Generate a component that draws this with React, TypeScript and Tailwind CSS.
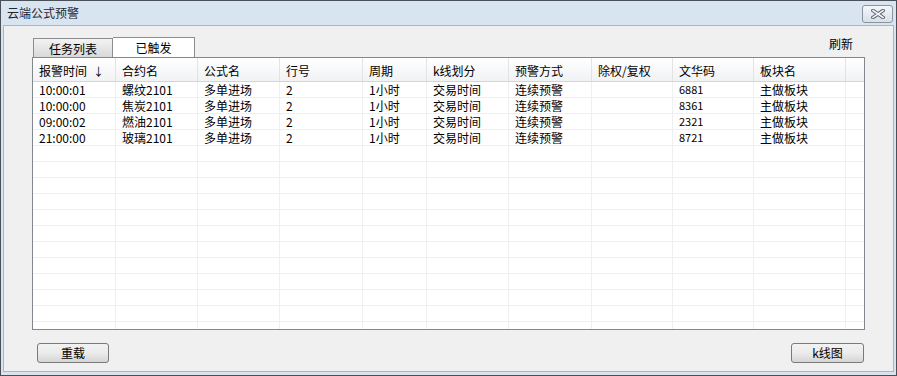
import React from "react";

const font = { fontFamily: '"Noto Sans CJK SC", "Liberation Sans", sans-serif' };

const columns = [
  { title: "报警时间", w: "w-[83px]" },
  { title: "合约名", w: "w-[82px]" },
  { title: "公式名", w: "w-[82px]" },
  { title: "行号", w: "w-[83px]" },
  { title: "周期", w: "w-[64px]" },
  { title: "k线划分", w: "w-[82px]" },
  { title: "预警方式", w: "w-[83px]" },
  { title: "除权/复权", w: "w-[81px]" },
  { title: "文华码", w: "w-[81px]" },
  { title: "板块名", w: "w-[92px]" },
];

const rows = [
  ["10:00:01", "螺纹2101", "多单进场", "2", "1小时", "交易时间", "连续预警", "", "6881", "主做板块"],
  ["10:00:00", "焦炭2101", "多单进场", "2", "1小时", "交易时间", "连续预警", "", "8361", "主做板块"],
  ["09:00:02", "燃油2101", "多单进场", "2", "1小时", "交易时间", "连续预警", "", "2321", "主做板块"],
  ["21:00:00", "玻璃2101", "多单进场", "2", "1小时", "交易时间", "连续预警", "", "8721", "主做板块"],
];

const blankRows = Array.from({ length: 12 }, () => Array(10).fill(""));

function CloseButton() {
  return <div className="flex h-[18px] w-[31px] items-center justify-center rounded-[3px] border border-[#8b939c] bg-gradient-to-b from-[#f4f7fb] to-[#d7dfe8]">
    <svg width="14" height="10" viewBox="0 0 14 10">
      <path d="M2 1.5 L12 8.5 M12 1.5 L2 8.5" stroke="#5d6670" strokeWidth="3.6" strokeLinecap="square" />
      <path d="M2 1.5 L12 8.5 M12 1.5 L2 8.5" stroke="#f2f4f7" strokeWidth="1.6" strokeLinecap="square" />
    </svg>
  </div>;
}

function Button({ children, className = "" }: { children: React.ReactNode; className?: string }) {
  return <div className={`flex h-[20px] items-center justify-center rounded-[3px] border border-[#7a7a7a] bg-gradient-to-b from-[#f2f2f2] via-[#ebebeb] to-[#d5d5d5] text-[12px] text-black ${className}`}>{children}</div>;
}

export default function App() {
  return <div style={font} className="flex h-[376px] w-[897px] flex-col border border-[#4a5059] bg-[#d9e4f1] text-[12px] text-black">
    <div className="flex h-[24px] items-center justify-between pl-[6px] pr-[3px]">
      <span className="text-[12px] text-[#1e2630]">云端公式预警</span>
      <div className="mt-[2px]"><CloseButton /></div>
    </div>

    <div className="mx-[2px] mb-[3px] flex flex-1 flex-col border border-[#aab6c4] bg-[#f0f0f0] px-[28px]">
      <div className="mt-[11px] flex h-[20px] items-end justify-between">
        <div className="flex items-end pl-[1px]">
          <div className="flex h-[19px] w-[80px] items-center justify-center border border-b-0 border-[#8d8d8d] bg-gradient-to-b from-[#f3f3f3] to-[#d9d9d9] pt-[1px]">任务列表</div>
          <div className="flex h-[20px] w-[82px] items-center justify-center border border-b-0 border-l-0 border-[#8d8d8d] bg-white">已触发</div>
        </div>
        <span className="mb-[4px] mr-[12px]">刷新</span>
      </div>

      <div className="h-[273px] overflow-hidden border border-[#828790] bg-white">
        <div className="flex h-[24px] border-b border-[#d5d5d5] bg-gradient-to-b from-white to-[#f1f2f4]">
          {columns.map((c, i) => <div key={c.title} className={`${c.w} flex shrink-0 items-center border-r border-[#e3e3e3] pl-[6px] pt-[3px]`}>
            {c.title}{i === 0 ? <span className="ml-[6px] text-[11px]">↓</span> : null}
          </div>)}
          <div className="flex-1" />
        </div>
        {[...rows, ...blankRows].map((r, ri) => <div key={ri} className="flex h-[16px] border-b border-[#efefef]">
          {r.map((v, ci) => <div key={ci} className={`${columns[ci].w} flex shrink-0 items-center overflow-hidden border-r border-[#efefef] pl-[6px] leading-none ${ci === 8 ? "text-[11px]" : ""}`}>{v}</div>)}
          <div className="flex-1" />
        </div>)}
      </div>

      <div className="mt-[13px] flex justify-between pl-[5px] pr-[1px]">
        <Button className="w-[72px]">重载</Button>
        <Button className="w-[73px]">k线图</Button>
      </div>
    </div>
  </div>;
}
